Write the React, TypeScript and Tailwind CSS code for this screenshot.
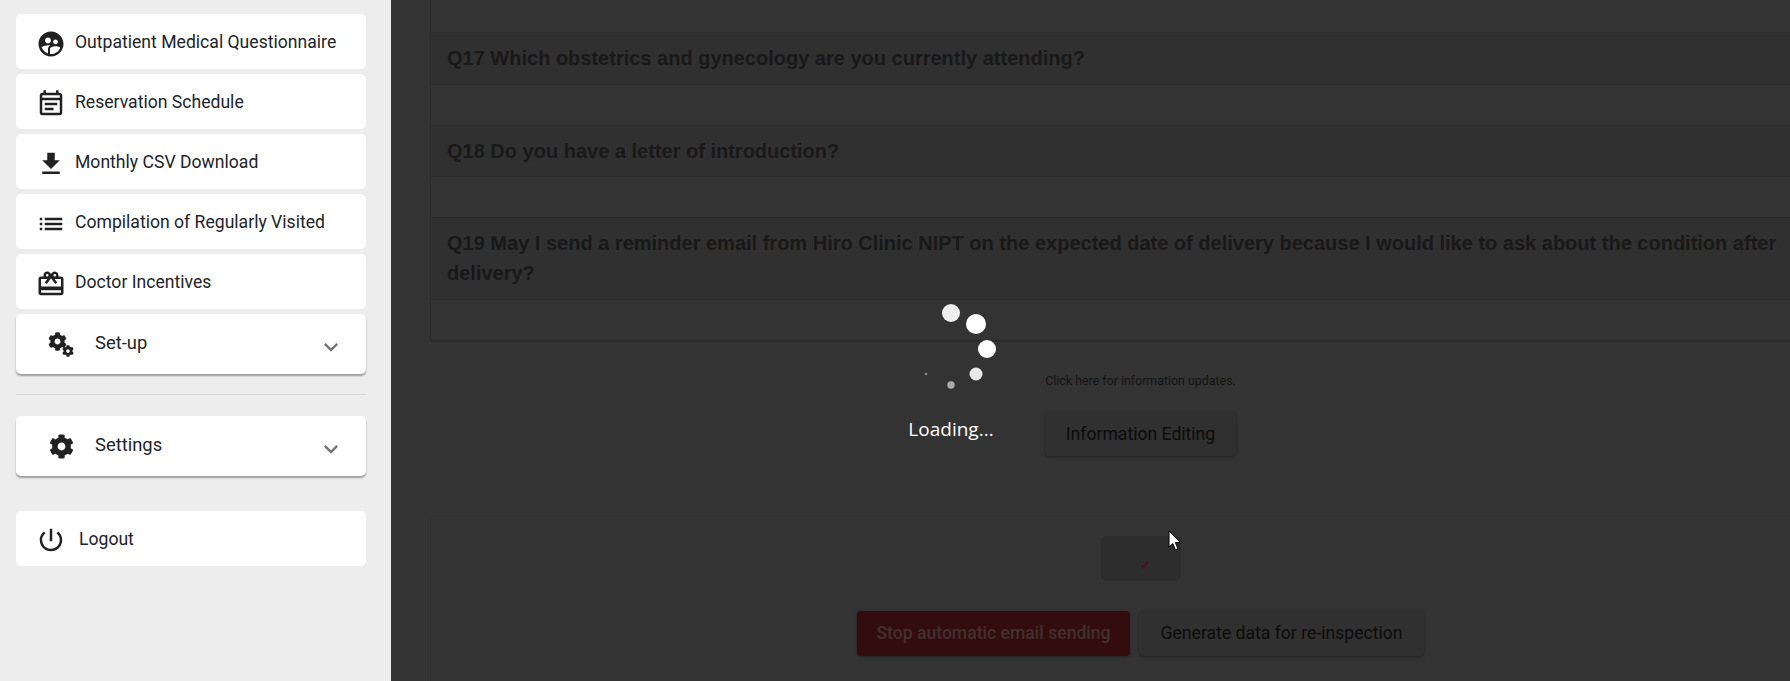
import { MdSupervisedUserCircle, MdOutlineEventNote, MdFileDownload, MdList, MdOutlineRedeem, MdExpandMore, MdPowerSettingsNew } from "react-icons/md";
import { FaCog } from "react-icons/fa";
import type { ReactNode } from "react";

const roboto = "font-['Roboto',sans-serif]";

function NavItem({ icon, label }: { icon: ReactNode; label: string }) {
  return (
    <div className="h-[55px] rounded-[5px] bg-white flex items-center pl-[20px] text-[17.6px] text-[#212529]">
      <span className="w-[30px] h-[30px] flex items-center justify-center mt-[4px] text-[#212121] text-[30px]">{icon}</span>
      <span className="ml-[9px] mt-[2px]">{label}</span>
    </div>
  );
}

function AccordionItem({ icon, label }: { icon: ReactNode; label: string }) {
  return (
    <div className="h-[60px] rounded-[5px] bg-white flex items-center pl-[32px] pr-[21px] text-[18.4px] text-[#212529] shadow-[0_2px_2px_rgba(0,0,0,0.35)]">
      <span className="w-[26px] h-[26px] flex items-center justify-center text-[#212121]">{icon}</span>
      <span className="ml-[21px] -mt-[3px] flex-1">{label}</span>
      <MdExpandMore className="text-[28px] text-[#757575] mt-[6px]" />
    </div>
  );
}

function Gears() {
  return (
    <span className="relative block w-[26px] h-[26px]">
      <FaCog className="w-[19px] h-[19px] mt-[1px]" />
      <FaCog className="absolute right-0 bottom-0 w-[12px] h-[12px]" />
    </span>
  );
}

function Sidebar() {
  return (
    <aside className={`w-[391px] shrink-0 bg-[#ededed] pl-[16px] pr-[25px] pt-[14px] ${roboto}`}>
      <div className="flex flex-col gap-[5px]">
        <NavItem icon={<MdSupervisedUserCircle />} label="Outpatient Medical Questionnaire" />
        <NavItem icon={<MdOutlineEventNote />} label="Reservation Schedule" />
        <NavItem icon={<MdFileDownload />} label="Monthly CSV Download" />
        <NavItem icon={<MdList />} label="Compilation of Regularly Visited" />
        <NavItem icon={<MdOutlineRedeem />} label="Doctor Incentives" />
        <AccordionItem icon={<Gears />} label="Set-up" />
      </div>
      <div className="mt-[20px] mb-[21px] h-px bg-[#d9d9d9]" />
      <AccordionItem icon={<FaCog className="text-[25px]" />} label="Settings" />
      <div className="mt-[35px] h-[55px] rounded-[5px] bg-white flex items-center pl-[20px] text-[#212529] text-[17.6px]">
        <MdPowerSettingsNew className="w-[30px] h-[30px] mt-[3px] text-[#212121]" />
        <span className="ml-[13px] mt-[2px]">Logout</span>
      </div>
    </aside>
  );
}

function QuestionRow({ children, h, pb }: { children: ReactNode; h: string; pb: string }) {
  return (
    <div className={`${h} ${pb} border-b border-[#2b2b2b] bg-[#303030] pl-[16px] pr-[52px] flex items-center font-['Liberation_Sans',sans-serif] font-bold text-[20px] leading-[30px] text-[#191919]`}>
      <div>{children}</div>
    </div>
  );
}

function EmptyRow({ h }: { h: string }) {
  return <div className={`${h} border-b border-[#2e2e2e]`} />;
}

function Spinner() {
  const dots: [number, number, number, string][] = [
    [51, 14, 9, "#eeeeee"],
    [76, 25, 10, "#ffffff"],
    [87, 50, 9, "#ffffff"],
    [76, 75, 6.5, "#e8e8e8"],
    [51, 86, 3.7, "#aaaaaa"],
    [26, 75, 1.3, "#888888"],
  ];
  return (
    <svg viewBox="0 0 100 100" className="w-[100px] h-[100px] -ml-[2px]">
      {dots.map(([cx, cy, r, fill]) => (
        <circle key={cx + "-" + cy} cx={cx} cy={cy} r={r} fill={fill} />
      ))}
    </svg>
  );
}

function Main() {
  return (
    <main className={`relative flex-1 min-w-0 h-[681px] overflow-hidden bg-[#333333] ${roboto}`}>
      <section className="ml-[39px] -mr-[40px] border-l border-b-[2px] border-[#2b2b2b]">
        <EmptyRow h="h-[33px]" />
        <QuestionRow h="h-[52px]" pb="pb-[2px]">Q17 Which obstetrics and gynecology are you currently attending?</QuestionRow>
        <EmptyRow h="h-[41px]" />
        <QuestionRow h="h-[51px]" pb="pb-0">Q18 Do you have a letter of introduction?</QuestionRow>
        <EmptyRow h="h-[41px]" />
        <QuestionRow h="h-[82px]" pb="pb-[2px]">
          Q19 May I send a reminder email from Hiro Clinic NIPT on the expected date of delivery because I would like to ask about the condition after delivery?
        </QuestionRow>
        <div className="h-[40px]" />
      </section>

      <div className="flex flex-col items-center w-[191px] ml-[654px] mt-[32px]">
        <div className="text-[12.4px] leading-[14px] text-[#141414] whitespace-nowrap">Click here for information updates.</div>
        <button className="mt-[24px] h-[44px] w-full rounded-[4px] bg-[#303030] text-[17.6px] text-[#0c0c0c] shadow-[0_1px_3px_rgba(0,0,0,0.3)]">Information Editing</button>
      </div>

      <section className="ml-[39px] -mr-[40px] mt-[60px] pt-[19px] pb-[40px] border-l border-t border-[#303030]">
        <div className="w-[80px] h-[45px] ml-[670px] rounded-[5px] bg-[#2d2d2d]">
          <svg viewBox="0 0 80 45" className="w-[80px] h-[45px]"><path d="M41.5 31 L46.5 26.5" stroke="#4a1028" strokeWidth="2.6" strokeLinecap="round" /></svg>
        </div>

        <div className="flex gap-[9px] ml-[426px] mt-[30px]">
          <button className="h-[45px] w-[273px] rounded-[4px] bg-[#330d0d] text-[17.6px] font-medium text-[#42302f] shadow-[0_1px_3px_rgba(0,0,0,0.3)]">Stop automatic email sending</button>
          <button className="h-[45px] w-[285px] rounded-[4px] bg-[#303030] text-[17.6px] text-[#0c0c0c] shadow-[0_1px_3px_rgba(0,0,0,0.3)]">Generate data for re-inspection</button>
        </div>
      </section>

      <div className="absolute left-[460px] top-[299px] w-[200px] flex flex-col items-center">
        <Spinner />
        <div className="mt-[18px] text-[19px] leading-[24px] text-white font-['Open_Sans',sans-serif]">Loading...</div>
      </div>

      <svg viewBox="0 0 14 22" className="absolute left-[777px] top-[530px] w-[14px] h-[22px]">
        <path d="M1 1 L1 17 L4.8 13.6 L7.4 20 L10 19 L7.4 12.6 L12.4 12.6 Z" fill="#ffffff" stroke="#000000" strokeWidth="1" />
      </svg>
    </main>
  );
}

export default function App() {
  return (
    <div className="flex w-[1790px] h-[681px] overflow-hidden">
      <Sidebar />
      <Main />
    </div>
  );
}
